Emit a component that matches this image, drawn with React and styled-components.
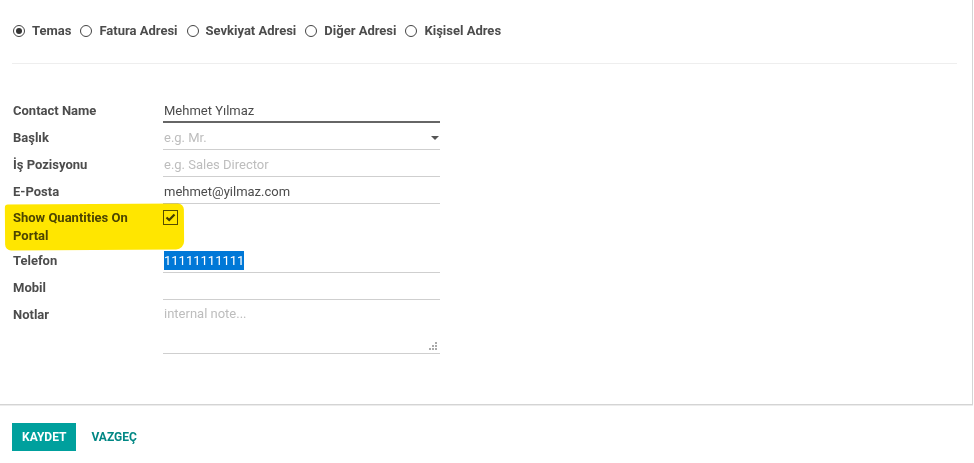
import React from "react";
import styled, { createGlobalStyle, css } from "styled-components";

const GlobalStyle = createGlobalStyle`
  body {
    margin: 0;
    background: #ffffff;
    font-family: Roboto, "Noto Sans", "Liberation Sans", sans-serif;
    font-size: 13px;
    color: #4c4c4c;
  }
`;

const Sheet = styled.div`
  width: 973px;
  box-sizing: border-box;
  padding: 21px 15px 50px 12px;
  border-right: 1px solid #d4d4d4;
  border-bottom: 1px solid #d4d4d4;
  box-shadow: 0 1px 0 #ececec;
  background: #fff;
`;

const RadioGroup = styled.div`
  display: flex;
  align-items: center;
  gap: 9px;
  height: 19px;
  padding-left: 1px;
`;

const RadioItem = styled.label`
  display: flex;
  align-items: center;
  gap: 7px;
  font-weight: 700;
  line-height: 19px;
  color: #4c4c4c;
`;

const RadioDot = styled.span`
  position: relative;
  width: 12px;
  height: 12px;
  box-sizing: border-box;
  border: 1px solid #444;
  border-radius: 50%;
  ${(p) =>
    p.$checked &&
    css`
      &::after {
        content: "";
        position: absolute;
        left: 2px;
        top: 2px;
        width: 6px;
        height: 6px;
        border-radius: 50%;
        background: #333;
      }
    `}
`;

const Separator = styled.hr`
  border: 0;
  border-top: 1px solid #eeeeee;
  margin: 23px 0 35px 0;
`;

const FormGrid = styled.div`
  display: grid;
  grid-template-columns: 151px 277px;
  row-gap: 3px;
`;

const Label = styled.div`
  position: relative;
  font-weight: 700;
  line-height: ${(p) => (p.$multi ? "18px" : "19px")};
  padding-top: 2px;
  padding-left: 1px;
  color: #4c4c4c;
`;

const Field = styled.div`
  display: flex;
  align-items: center;
  justify-content: space-between;
  padding: 2px 0 ${(p) => (p.$focused ? "1px" : "2px")} 1px;
  line-height: 19px;
  border-bottom: ${(p) => (p.$focused ? "2px solid #666" : "1px solid #cfcfcf")};
  color: ${(p) => (p.$placeholder ? "#bdbdbd" : "#4c4c4c")};
`;

const NoteArea = styled.div`
  position: relative;
  height: 49px;
  padding: 1px 0 0 1px;
  line-height: 19px;
  color: #bdbdbd;
  border-bottom: 1px solid #cfcfcf;
`;

const Caret = styled.span`
  width: 0;
  height: 0;
  margin-right: 1px;
  border-left: 4px solid transparent;
  border-right: 4px solid transparent;
  border-top: 4px solid #555;
`;

const Grip = styled.svg`
  position: absolute;
  right: 2px;
  bottom: 2px;
`;

const CheckCell = styled.div`
  padding-top: 3px;
  height: 36px;
`;

const CheckBox = styled.span`
  display: flex;
  align-items: center;
  justify-content: center;
  width: 15px;
  height: 15px;
  box-sizing: border-box;
  border: 1px solid #555;
  background: #fff;
`;

const Highlight = styled.div`
  position: absolute;
  left: -7px;
  top: -3px;
  width: 179px;
  height: 46px;
  background: #ffe600;
  mix-blend-mode: multiply;
  border-radius: 3px 6px 8px 6px;
  transform: rotate(-0.4deg);
  pointer-events: none;
  z-index: 1;
`;

const Selected = styled.span`
  background: #0078d7;
  color: #fff;
`;

const Footer = styled.div`
  display: flex;
  align-items: center;
  gap: 15px;
  padding: 18px 12px;
`;

const Button = styled.button`
  height: 28px;
  padding: 0 ${(p) => (p.$primary ? "10px" : "0")};
  border: 0;
  border-radius: 0;
  font-family: Roboto, "Noto Sans", "Liberation Sans", sans-serif;
  font-size: 12px;
  font-weight: 700;
  text-transform: uppercase;
  background: ${(p) => (p.$primary ? "#00a09d" : "transparent")};
  color: ${(p) => (p.$primary ? "#ffffff" : "#008784")};
`;

const radios = ["Temas", "Fatura Adresi", "Sevkiyat Adresi", "Diğer Adresi", "Kişisel Adres"];

export default function App() {
  return (
    <>
      <GlobalStyle />
      <Sheet>
        <RadioGroup>
          {radios.map((r, i) => (
            <RadioItem key={r}>
              <RadioDot $checked={i === 0} />
              {r}
            </RadioItem>
          ))}
        </RadioGroup>
        <Separator />
        <FormGrid>
          <Label>Contact Name</Label>
          <Field $focused>Mehmet Yılmaz</Field>

          <Label>Başlık</Label>
          <Field $placeholder>
            e.g. Mr.
            <Caret />
          </Field>

          <Label>İş Pozisyonu</Label>
          <Field $placeholder>e.g. Sales Director</Field>

          <Label>E-Posta</Label>
          <Field>mehmet@yilmaz.com</Field>

          <Label $multi>
            Show Quantities On
            <br />
            Portal
            <Highlight />
          </Label>
          <CheckCell>
            <CheckBox>
              <svg width="11" height="9" viewBox="0 0 11 9">
                <path d="M1.5 4.5 L4.2 7 L9.5 1.5" fill="none" stroke="#444" strokeWidth="2.2" />
              </svg>
            </CheckBox>
          </CheckCell>

          <Label>Telefon</Label>
          <Field>
            <Selected>11111111111</Selected>
          </Field>

          <Label>Mobil</Label>
          <Field>&nbsp;</Field>

          <Label>Notlar</Label>
          <NoteArea>
            internal note...
            <Grip width="9" height="9" viewBox="0 0 9 9">
              <rect x="6" y="0" width="2" height="2" fill="#aaa" />
              <rect x="3" y="3" width="2" height="2" fill="#aaa" />
              <rect x="6" y="3" width="2" height="2" fill="#aaa" />
              <rect x="0" y="6" width="2" height="2" fill="#aaa" />
              <rect x="3" y="6" width="2" height="2" fill="#aaa" />
              <rect x="6" y="6" width="2" height="2" fill="#aaa" />
            </Grip>
          </NoteArea>
        </FormGrid>
      </Sheet>
      <Footer>
        <Button $primary>Kaydet</Button>
        <Button>Vazgeç</Button>
      </Footer>
    </>
  );
}
